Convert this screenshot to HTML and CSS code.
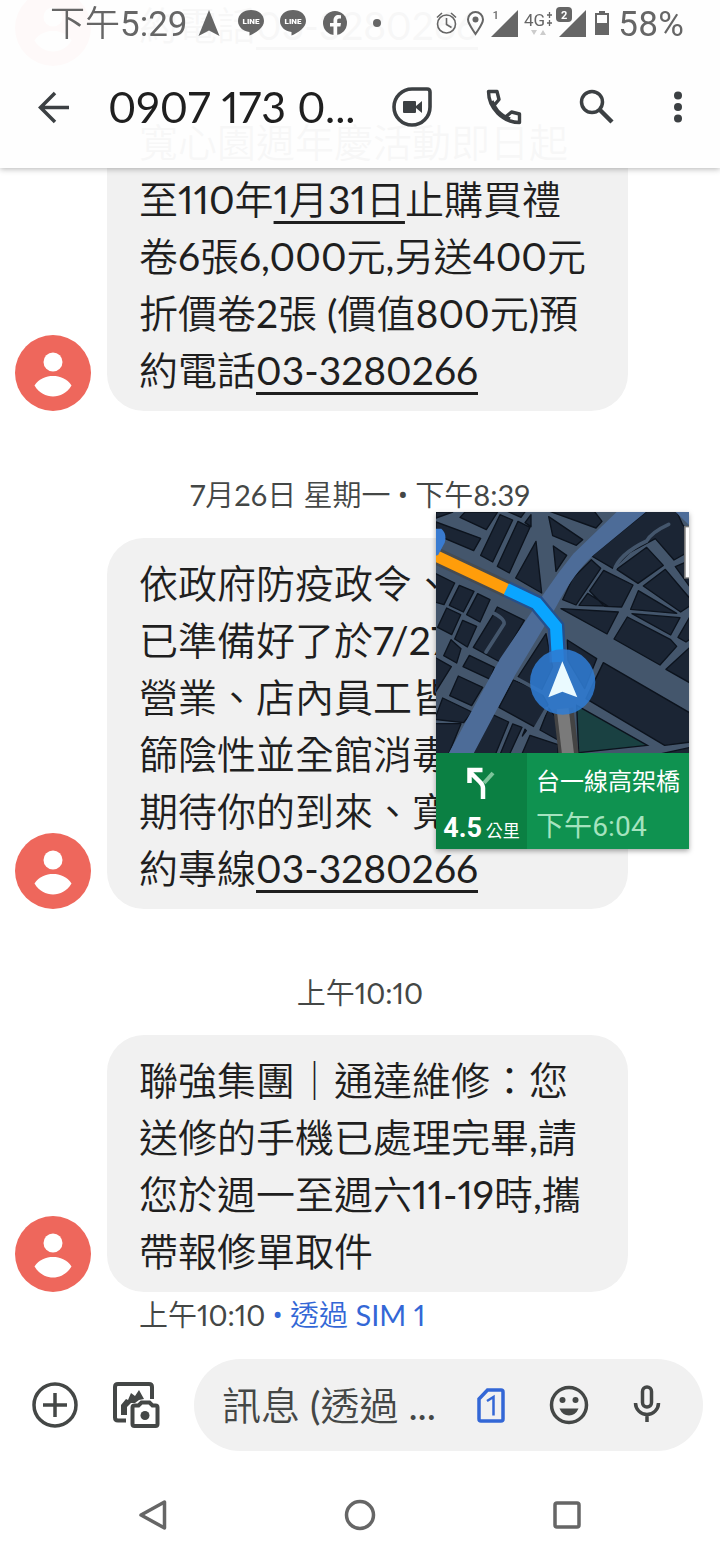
FILE: index.html
```html
<!DOCTYPE html>
<html lang="zh-Hant">
<head>
    <meta charset="UTF-8">
    <meta name="viewport" content="width=device-width, initial-scale=1.0">
    <title>0907 173 0...</title>
    <link rel="stylesheet" href="styles.css">
</head>
<body>
    <header class="top">
        <div class="status-bar">
            <div class="status-left">
                <span class="clock">下午5:29</span>
                <svg width="26" height="36" viewBox="0 0 26 36"><path d="M13 4 L23.500 30 L13 24.500 L2.500 30 Z" fill="#666"/></svg>
                <svg width="26" height="36" viewBox="0 0 26 36"><path d="M13 4C5.500 4 0 8.500 0 15c0 6 5 10 11.500 11v3.500C18 27 26 21.500 26 15 26 8.500 20.500 4 13 4z" fill="#666"/><text x="13" y="18" class="line-logo">LINE</text></svg>
                <svg width="26" height="36" viewBox="0 0 26 36"><path d="M13 4C5.500 4 0 8.500 0 15c0 6 5 10 11.500 11v3.500C18 27 26 21.500 26 15 26 8.500 20.500 4 13 4z" fill="#666"/><text x="13" y="18" class="line-logo">LINE</text></svg>
                <svg width="26" height="36" viewBox="0 0 26 36"><circle cx="13" cy="17" r="12" fill="#666"/><path d="M11.500 29v-8.500H8V17h3.500v-2.500c0-3.500 2-5.500 5-5.500l2.500.2v3.300h-1.800c-1.400 0-2 .8-2 2V17H19l-.6 3.500h-3.200V29z" fill="#fdfdfd"/></svg>
                <svg width="26" height="36" viewBox="0 0 26 36"><circle cx="13" cy="17" r="4" fill="#666"/></svg>
            </div>
            <div class="status-right">
                <svg width="26" height="36" viewBox="0 0 26 36" fill="none" stroke="#666" stroke-width="1.600"><circle cx="12.500" cy="18" r="9"/><path d="M12.500 12v6.500l5 3M3 11.500l5-4.500M22 11.500L17 7"/></svg>
                <svg width="20" height="36" viewBox="0 0 20 36"><path d="M11.500 28C7 21 4 17.500 4 13.500a7.500 7.500 0 0 1 15 0C19 17.500 16 21 11.500 28z" fill="none" stroke="#666" stroke-width="2"/><circle cx="11.500" cy="13.500" r="3" fill="#666"/></svg>
                <svg width="30" height="36" viewBox="0 0 30 36"><path d="M30 4v27H3z" fill="#666"/><text x="5" y="13" class="sim-no">1</text></svg>
                <svg width="30" height="36" viewBox="0 0 30 36"><text x="2" y="20" class="net">4G</text><path d="M25 9h5M27.500 6v6M25 17h5M27.500 14v6" stroke="#666" stroke-width="1.300"/><path d="M9 24h6l-3 5zM18 29h6l-3-5z" fill="#ccc"/></svg>
                <svg width="34" height="36" viewBox="0 0 34 36"><path d="M30 4v27H3z" fill="#666"/><rect x="-.5" y="0" width="17" height="17" rx="4" fill="#fdfdfd"/><rect x="0" y="1" width="16" height="15" rx="4" fill="#666"/><text x="5" y="13" class="sim-no on">2</text></svg>
                <svg width="20" height="36" viewBox="0 0 20 36"><path d="M5 5h6v2h4v22H1V7h4z" fill="#666"/><path d="M3 9h10v8H3z" fill="#fdfdfd"/></svg>
                <span class="clock">58%</span>
            </div>
        </div>
        <div class="toolbar">
            <button class="icon-btn" aria-label="返回"><svg width="34" height="34" viewBox="0 0 34 34" fill="none" stroke="#3c4043" stroke-width="3.500"><path d="M32 17.500H4M18 3L3.500 17.500 18 32"/></svg></button>
            <h1 class="title">0907 173 0...</h1>
            <div class="actions">
                <button class="icon-btn" aria-label="視訊通話"><svg width="40" height="40" viewBox="0 0 40 40"><path d="M20 2h15q3 0 3 3v15A18 18 0 1 1 20 2z" fill="none" stroke="#3c4043" stroke-width="3.600"/><path d="M11 15q0-1 1-1h11q1 0 1 1v4l6-5v12l-6-5v4q0 1-1 1H12q-1 0-1-1z" fill="#3c4043"/></svg></button>
                <button class="icon-btn" aria-label="撥號"><svg width="36" height="36" viewBox="0 0 36 36" fill="none" stroke="#3c4043" stroke-width="3.400" stroke-linejoin="round"><path d="M2.500 2.500h8.500l2 8-5 6q4 7.500 11.500 11.500l6-5 8 2v8.500C17 33.500 2.500 19 2.500 2.500zM8 16.500L6 12M19.500 28l4.500 2"/></svg></button>
                <button class="icon-btn" aria-label="搜尋"><svg width="36" height="36" viewBox="0 0 36 36" fill="none" stroke="#3c4043"><circle cx="14" cy="13" r="10.500" stroke-width="3.500"/><path d="M22 21l12 12" stroke-width="4.500"/></svg></button>
                <button class="icon-btn more" aria-label="更多"><svg width="10" height="34" viewBox="0 0 10 34" fill="#3c4043"><circle cx="5" cy="5.500" r="4"/><circle cx="5" cy="17" r="4"/><circle cx="5" cy="28.500" r="4"/></svg></button>
            </div>
        </div>
    </header>

    <main class="thread">
        <div class="message">
            <svg class="avatar" viewBox="0 0 76 76"><circle cx="38" cy="38" r="38" fill="#ee675c"/><circle cx="38" cy="27" r="9.500" fill="#fff"/><path d="M19.500 50.500C24 43.500 31 41 38 41s14 2.500 18.500 9.500C52 58 45 61.500 38 61.500S24 58 19.500 50.500z" fill="#fff"/></svg>
            <div class="bubble">約電話<a href="#">03-3280266</a></div>
        </div>
        <div class="message next">
            <svg class="avatar" viewBox="0 0 76 76"><circle cx="38" cy="38" r="38" fill="#ee675c"/><circle cx="38" cy="27" r="9.500" fill="#fff"/><path d="M19.500 50.500C24 43.500 31 41 38 41s14 2.500 18.500 9.500C52 58 45 61.500 38 61.500S24 58 19.500 50.500z" fill="#fff"/></svg>
            <div class="bubble">寬心園週年慶活動即日起<br>至110年<a href="#">1月31日</a>止購買禮<br>卷6張6,000元,另送400元<br>折價卷2張 (價值800元)預<br>約電話<a href="#">03-3280266</a></div>
        </div>
        <div class="timestamp">7月26日 星期一 <span class="dot">•</span> 下午8:39</div>
        <div class="message">
            <svg class="avatar" viewBox="0 0 76 76"><circle cx="38" cy="38" r="38" fill="#ee675c"/><circle cx="38" cy="27" r="9.500" fill="#fff"/><path d="M19.500 50.500C24 43.500 31 41 38 41s14 2.500 18.500 9.500C52 58 45 61.500 38 61.500S24 58 19.500 50.500z" fill="#fff"/></svg>
            <div class="bubble">依政府防疫政令、<br>已準備好了於7/27<br>營業、店內員工皆<br>篩陰性並全館消毒<br>期待你的到來、寬<br>約專線<a href="#">03-3280266</a></div>
        </div>
        <div class="timestamp">上午10:10</div>
        <div class="message">
            <svg class="avatar" viewBox="0 0 76 76"><circle cx="38" cy="38" r="38" fill="#ee675c"/><circle cx="38" cy="27" r="9.500" fill="#fff"/><path d="M19.500 50.500C24 43.500 31 41 38 41s14 2.500 18.500 9.500C52 58 45 61.500 38 61.500S24 58 19.500 50.500z" fill="#fff"/></svg>
            <div class="bubble">聯強集團｜通達維修：您<br>送修的手機已處理完畢,請<br>您於週一至週六11-19時,攜<br>帶報修單取件</div>
        </div>
        <div class="caption">上午10:10 <span class="sim"><span class="dot">•</span> 透過 SIM 1</span></div>
    </main>

    <form class="composer">
        <button type="button" class="icon-btn" aria-label="新增"><svg width="46" height="46" viewBox="0 0 46 46" fill="none" stroke="#444746" stroke-width="3.500"><circle cx="23" cy="23" r="21"/><path d="M23 11v24M11 23h24"/></svg></button>
        <button type="button" class="icon-btn gallery" aria-label="圖庫"><svg width="48" height="48" viewBox="0 0 48 48"><path d="M14 39.500H6q-3 0-3-3V6q0-3 3-3h31q3 0 3 3v12" fill="none" stroke="#444746" stroke-width="4"/><path d="M9 34V24l5-6 2 1 3-7 4 3 4-6 5 9-5 1-4 3h-4l-4 4v8z" fill="#444746"/><path d="M20.500 26.500q0-2 2-2h4l3-3h8l3 3h3q2 0 2 2V43q0 2-2 2h-21q-2 0-2-2z" fill="#fff" stroke="#444746" stroke-width="4"/><circle cx="33" cy="34.500" r="4.500" fill="#444746"/></svg></button>
        <div class="field">
            <input type="text" class="message-input" aria-label="訊息" placeholder="訊息 (透過 ...">
            <button type="button" class="icon-btn small" aria-label="SIM 1"><svg width="30" height="38" viewBox="0 0 30 38" fill="none" stroke="#3367d6"><path d="M11.500 4H25q2 0 2 2v27q0 2-2 2H5q-2 0-2-2V13z" stroke-width="3.500"/><path d="M11 15l6.500-4v18.500" stroke-width="2.500"/></svg></button>
            <button type="button" class="icon-btn small" aria-label="表情符號"><svg width="40" height="40" viewBox="0 0 40 40"><circle cx="20" cy="20" r="17.500" fill="none" stroke="#444746" stroke-width="3.500"/><circle cx="13.500" cy="15" r="3" fill="#444746"/><circle cx="26.500" cy="15" r="3" fill="#444746"/><path d="M10.500 23.500h19q-3 7-9.500 7t-9.500-7z" fill="#444746"/></svg></button>
            <button type="button" class="icon-btn small" aria-label="語音"><svg width="30" height="40" viewBox="0 0 30 40" fill="none" stroke="#444746" stroke-width="3.500"><rect x="10.500" y="2" width="9" height="20" rx="4.500"/><path d="M3.500 18a11.500 11.500 0 0 0 23 0M15 29v8"/></svg></button>
        </div>
    </form>

    <nav class="nav-bar">
        <button class="icon-btn" aria-label="上一頁"><svg width="30" height="32" viewBox="0 0 30 32"><path d="M26.500 3v26L3 16z" fill="none" stroke="#666" stroke-width="3.500" stroke-linejoin="round"/></svg></button>
        <button class="icon-btn" aria-label="首頁"><svg width="32" height="32" viewBox="0 0 32 32"><circle cx="16" cy="16" r="13.500" fill="none" stroke="#666" stroke-width="3.500"/></svg></button>
        <button class="icon-btn" aria-label="最近使用"><svg width="30" height="30" viewBox="0 0 30 30"><rect x="3" y="3" width="24" height="24" rx="2" fill="none" stroke="#666" stroke-width="3.500"/></svg></button>
    </nav>

    <!-- navigation picture-in-picture -->
    <aside class="pip">
        <svg class="map" viewBox="18 20 759 724">
            <rect x="18" y="20" width="759" height="724" fill="#44566c"/>
            <g fill="#1b2534" stroke="#0c131d" stroke-width="4" stroke-linejoin="round">
                <path d="M18 20h50L18 38zM105 20h98l-34 53-79-37zM18 50l134 49-21 37L18 88zM210 28l38 16-60 126-36-20zM264 48l36 18-62 137-36-20zM232 18h54l-13 18zM303 28v36l-18-12z"/>
                <path d="M318 108l17 155-78-45zM348 14h142l26 34-18 20zM356 34l102 69-19 17-71-29zM370 122l40 28-32 48z"/>
                <path d="M14 203l60 30-32 65-28-8zM88 240l44 18-32 62-42-20zM143 265l37 18-30 67-40-22zM50 308l42 20-27 60-42-22zM98 345l42 18-28 62-38-24zM202 305l81 40-73 125-80-44 60-98zM63 403l30 27-13 43-39-22zM14 456l50 28-50 80zM118 450l75 36-12 36-82-38zM85 512l73 34-33 55-66-30zM38 578l88 42-25 32-87-10zM14 655h79l-38 93H14zM188 628l48 22-40 98h-75zM248 656l28 10-38 82h-28zM300 690l84 28v30H275zM285 672l-8 20 12-16z"/>
                <path d="M348 385l20 100-36 75-70-42zM250 524l82 34 22 40-38 68-109-60zM356 608l24 32 4 64-54-30z"/>
                <path d="M650 18h90l18 40 24 30v48l-50 28-56-64-78 42-48 48-65-38zM484 163l28 26-74 110-40-16 30-64zM521 195l88 44-34 66-52-2-44-46zM447 300l26-36 60 38zM560 192l90-66 50 54-76 54zM706 192l76 90v18l-30 20-112-78zM736 184l46-20v84zM625 256l115 68-138-12zM393 310l172 10-34 66zM592 335l130 68 18 20-50 56-138-78zM606 325l144 12-28 52zM782 330l-38 66 24 14 14-10zM708 492l74-68v110z"/>
                <path d="M412 404l88 56-36 90-50-84zM520 472l262 152v86l-78 10-236-140zM782 726v20H690z"/>
            </g>
            <path d="M440 600l212 120-206 22z" fill="#1a4142" stroke="#0c131d" stroke-width="4"/>
            <g fill="none" stroke="#44566c" stroke-width="11" stroke-linecap="round">
                <path d="M716 57q-52 24-66 50-84 40-98 90M168 440l54-84q4-14-34-34M252 515l96 52M350 610l-36 62"/>
            </g>
            <path d="M565 15L650 18 490 150Q430 205 378 305L255 510 130 746H55L210 460 345 260Q385 200 430 145z" fill="#4d6c98"/>
            <path d="M735 18h45v44z" fill="#4d6c98"/>
            <path d="M400 610l16 136" stroke="#444" stroke-width="60"/>
            <path d="M398 610l16 136" stroke="#7a7a7a" stroke-width="36"/>
            <path d="M12 140L330 278l68 85 2 120" fill="none" stroke="#3d4347" stroke-width="8"/>
            <path d="M20 152L231 252 320 294 378 364 384 470" fill="none" stroke="#26508c" stroke-width="50"/>
            <path d="M20 152l211 100" stroke="#494c4e" stroke-width="50"/>
            <path d="M18 152l213 100" stroke="#ff9d0a" stroke-width="34"/>
            <path d="M229 251l91 43 58 70 6 106" fill="none" stroke="#0aa5ff" stroke-width="36"/>
            <path d="M10 70h24q18 16 10 42L24 150H10z" fill="#397bd0"/>
            <circle cx="398" cy="530" r="98" fill="#2f7bd2" fill-opacity=".88"/>
            <path d="M397 468l45 108-45-17-42 17z" fill="#eafaff"/>
            <path d="M762 62h18v158h-18z" fill="#777"/>
            <path d="M767 66h14v150h-14z" fill="#fff"/>
        </svg>
        <div class="guide">
            <div class="turn">
                <svg width="30" height="34" viewBox="0 0 30 34" fill="none"><path d="M17 17l9-10" stroke="#7cc49a" stroke-width="4"/><path d="M16 33V22q0-3-3-6L4 7M2.500 17V4h13" stroke="#fff" stroke-width="4.500"/></svg>
                <div class="distance">4.5 <small>公里</small></div>
            </div>
            <div class="road">
                <div class="road-name">台一線高架橋</div>
                <div class="eta">下午6:04</div>
            </div>
        </div>
    </aside>
</body>
</html>
```

FILE: styles.css
```css
* {
    box-sizing: border-box;
}
body {
    margin: 0;
    height: 100vh;
    display: flex;
    flex-direction: column;
    overflow: hidden;
    background-color: #fff;
    color: #1f1f1f;
    font-family: Lato, "Noto Sans CJK TC DemiLight", "Noto Sans CJK TC Light", "Noto Sans CJK TC", sans-serif;
    font-variant-numeric: proportional-nums;
}
svg {
    display: block;
    flex: none;
}
button {
    border: none;
    background: none;
    padding: 0;
    cursor: pointer;
}

.top {
    position: fixed;
    top: 0;
    left: 0;
    right: 0;
    z-index: 1;
    background-color: rgba(254, 254, 254, 0.97);
    box-shadow: 0 1px 6px rgba(0, 0, 0, 0.3);
}
.status-bar {
    height: 48px;
    display: flex;
    justify-content: space-between;
    align-items: center;
    padding: 0 36px 0 50px;
    font-family: Roboto, "Noto Sans CJK TC DemiLight", "Noto Sans CJK TC Light", "Noto Sans CJK TC", sans-serif;
    color: #666;
}
.status-left, .status-right {
    display: flex;
    align-items: center;
}
.status-left {
    gap: 16px;
}
.status-left .clock {
    margin-right: -8px;
}
.status-right {
    gap: 4px;
}
.clock {
    padding-top: 2px;
    font-size: 35px;
    line-height: 48px;
    white-space: nowrap;
}
.line-logo {
    font-size: 8px;
    font-weight: 900;
    text-anchor: middle;
    fill: #fff;
}
.sim-no {
    font-size: 11px;
    font-weight: 500;
    fill: #666;
}
.sim-no.on {
    font-weight: 700;
    fill: #fff;
}
.net {
    font-size: 17px;
    fill: #666;
}
.toolbar {
    height: 120px;
    display: flex;
    align-items: center;
    gap: 32px;
    padding: 0 30px 2px 32px;
}
.icon-btn {
    flex: none;
    width: 44px;
    height: 48px;
    display: flex;
    align-items: center;
    justify-content: center;
}
.icon-btn.more {
    width: 24px;
}
.icon-btn.small {
    width: 40px;
}
.icon-btn.gallery {
    width: 48px;
}
.title {
    flex: 1;
    min-width: 0;
    margin: 0;
    font-size: 43px;
    line-height: 56px;
    font-weight: 400;
    white-space: nowrap;
}
.actions {
    display: flex;
    gap: 48px;
}

/* Messages */
.thread {
    flex: 1;
    min-height: 0;
    display: flex;
    flex-direction: column;
    justify-content: flex-end;
    overflow: hidden;
}
.message {
    flex: none;
    display: flex;
    align-items: flex-end;
    gap: 16px;
    padding: 0 92px 0 15px;
}
.message.next {
    margin-top: 31px;
}
.avatar {
    width: 76px;
    height: 76px;
}
.bubble {
    flex: 1;
    min-width: 0;
    padding: 17px 32px 12px;
    border-radius: 37px;
    background-color: #f1f1f1;
    font-size: 39px;
    line-height: 57px;
    white-space: nowrap;
}
.bubble a {
    color: inherit;
    text-decoration-thickness: 3px;
    text-underline-offset: 7px;
    text-decoration-skip-ink: none;
}
.timestamp {
    flex: none;
    padding: 62px 0 20px;
    text-align: center;
    font-size: 29px;
    line-height: 44px;
    color: #444746;
}
.caption {
    flex: none;
    padding: 0 139px;
    font-size: 29px;
    line-height: 46px;
    color: #444746;
    white-space: nowrap;
}
.sim {
    color: #3367d6;
}
.dot {
    font-family: Roboto, sans-serif;
}

/* Text box */
.composer {
    display: flex;
    align-items: center;
    gap: 34px;
    padding: 20px 17px 18px 32px;
}
.composer > .icon-btn:first-child {
    width: 46px;
}
.field {
    flex: 1;
    min-width: 0;
    height: 92px;
    display: flex;
    align-items: center;
    gap: 38px;
    padding: 0 36px 0 28px;
    border-radius: 46px;
    background-color: #f1f1f1;
}
.message-input {
    flex: 1;
    min-width: 0;
    margin-right: -16px;
    padding: 0;
    border: none;
    outline: none;
    background: none;
    font-family: inherit;
    font-size: 39px;
    line-height: 56px;
    color: #444746;
}
.message-input::placeholder {
    color: #444746;
}
.nav-bar {
    height: 91px;
    display: grid;
    grid-template-columns: repeat(3, 1fr);
    justify-items: center;
    align-items: center;
    padding: 0 50px;
}

/* Floating map window */
.pip {
    position: fixed;
    top: 512px;
    right: 31px;
    width: 253px;
    z-index: 2;
    box-shadow: 0 2px 5px rgba(0, 0, 0, 0.35);
    color: #fff;
    font-family: Roboto, "Noto Sans CJK TC", sans-serif;
}
.map {
    width: 100%;
}
.guide {
    display: flex;
    height: 96px;
    background-color: #0f9250;
}
.turn {
    width: 91px;
    display: flex;
    flex-direction: column;
    align-items: center;
    gap: 10px;
    padding-top: 13px;
    background-color: #0b8043;
}
.distance {
    font-size: 27px;
    font-weight: 700;
    line-height: 36px;
    white-space: nowrap;
}
.distance small {
    margin-left: -3px;
    font-size: 17px;
    font-weight: 400;
}
.road {
    flex: 1;
    padding: 7px 0 0 9px;
    white-space: nowrap;
}
.road-name {
    font-size: 24px;
    line-height: 45px;
}
.eta {
    font-size: 28px;
    line-height: 44px;
    color: #a5e3bf;
}
```
